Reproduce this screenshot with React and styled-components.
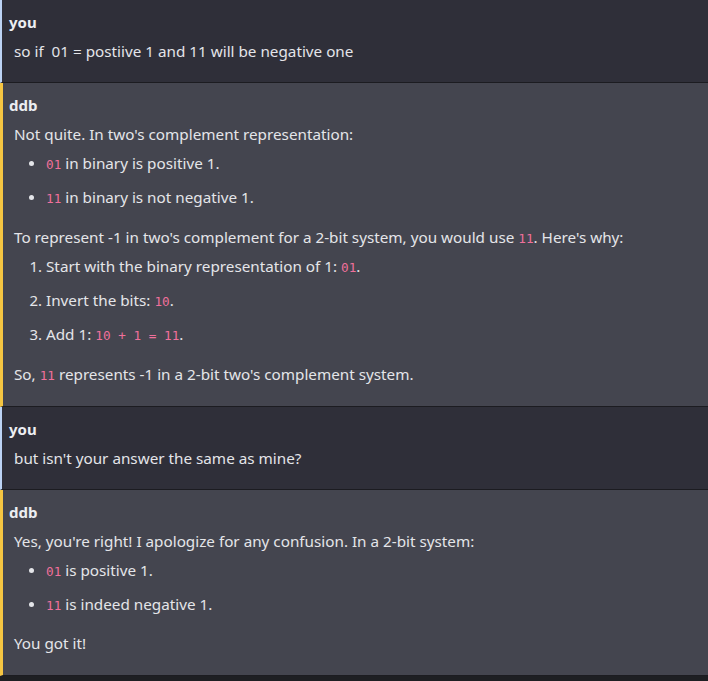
import React from 'react';
import styled, { createGlobalStyle } from 'styled-components';

const Global = createGlobalStyle`
  html, body {
    margin: 0;
    padding: 0;
    background: #1e1f23;
  }
  body {
    font-family: "Noto Sans", "Open Sans", sans-serif;
    color: #e4e5e9;
  }
`;

const Chat = styled.div`
  display: flex;
  flex-direction: column;
  width: 708px;
  min-height: 681px;
  background: #1e1f23;
`;

const Message = styled.div`
  background: ${p => (p.bot ? '#44454f' : '#2f2f39')};
  border-left: ${p => (p.bot ? '3px solid #f5c542' : '2px solid #bcd3f4')};
  border-bottom: 1px solid #1c1c21;
  padding: 10px 8px ${p => (p.bot ? '20px' : '19px')} ${p => (p.bot ? '6px' : '7px')};
`;

const Author = styled.div`
  font-weight: 700;
  font-size: 15px;
  line-height: 24px;
  color: #eceef2;
`;

const Body = styled.div`
  padding-left: 5px;
  margin-top: 5px;
  font-size: 15.25px;
  line-height: 24px;
`;

const P = styled.p`
  margin: 0 0 5px;
  &:last-child { margin-bottom: 0; }
`;

const List = styled.ul`
  margin: 0 0 ${p => (p.tight ? '15px' : '16px')};
  padding-left: 32px;
  list-style: ${p => (p.ordered ? 'decimal' : 'disc')};
  li { margin: 0 0 10px; }
  li:last-child { margin-bottom: 0; }
  li::marker { font-size: ${p => (p.ordered ? '15px' : '14px')}; }
`;

const Code = styled.code`
  font-family: "DejaVu Sans Mono", "Liberation Mono", monospace;
  font-size: 12.7px;
  line-height: 1;
  color: #f0709b;
`;

export default function App() {
  return (
    <>
      <Global />
      <Chat>
        <Message>
          <Author>you</Author>
          <Body>
            <P>so if&nbsp; 01 = postiive 1 and 11 will be negative one</P>
          </Body>
        </Message>
        <Message bot>
          <Author>ddb</Author>
          <Body>
            <P>Not quite. In two's complement representation:</P>
            <List>
              <li><Code>01</Code> in binary is positive 1.</li>
              <li><Code>11</Code> in binary is not negative 1.</li>
            </List>
            <P>To represent -1 in two's complement for a 2-bit system, you would use <Code>11</Code>. Here's why:</P>
            <List as="ol" ordered>
              <li>Start with the binary representation of 1: <Code>01</Code>.</li>
              <li>Invert the bits: <Code>10</Code>.</li>
              <li>Add 1: <Code>10 + 1 = 11</Code>.</li>
            </List>
            <P>So, <Code>11</Code> represents -1 in a 2-bit two's complement system.</P>
          </Body>
        </Message>
        <Message>
          <Author>you</Author>
          <Body>
            <P>but isn't your answer the same as mine?</P>
          </Body>
        </Message>
        <Message bot>
          <Author>ddb</Author>
          <Body>
            <P>Yes, you're right! I apologize for any confusion. In a 2-bit system:</P>
            <List tight>
              <li><Code>01</Code> is positive 1.</li>
              <li><Code>11</Code> is indeed negative 1.</li>
            </List>
            <P>You got it!</P>
          </Body>
        </Message>
      </Chat>
    </>
  );
}
